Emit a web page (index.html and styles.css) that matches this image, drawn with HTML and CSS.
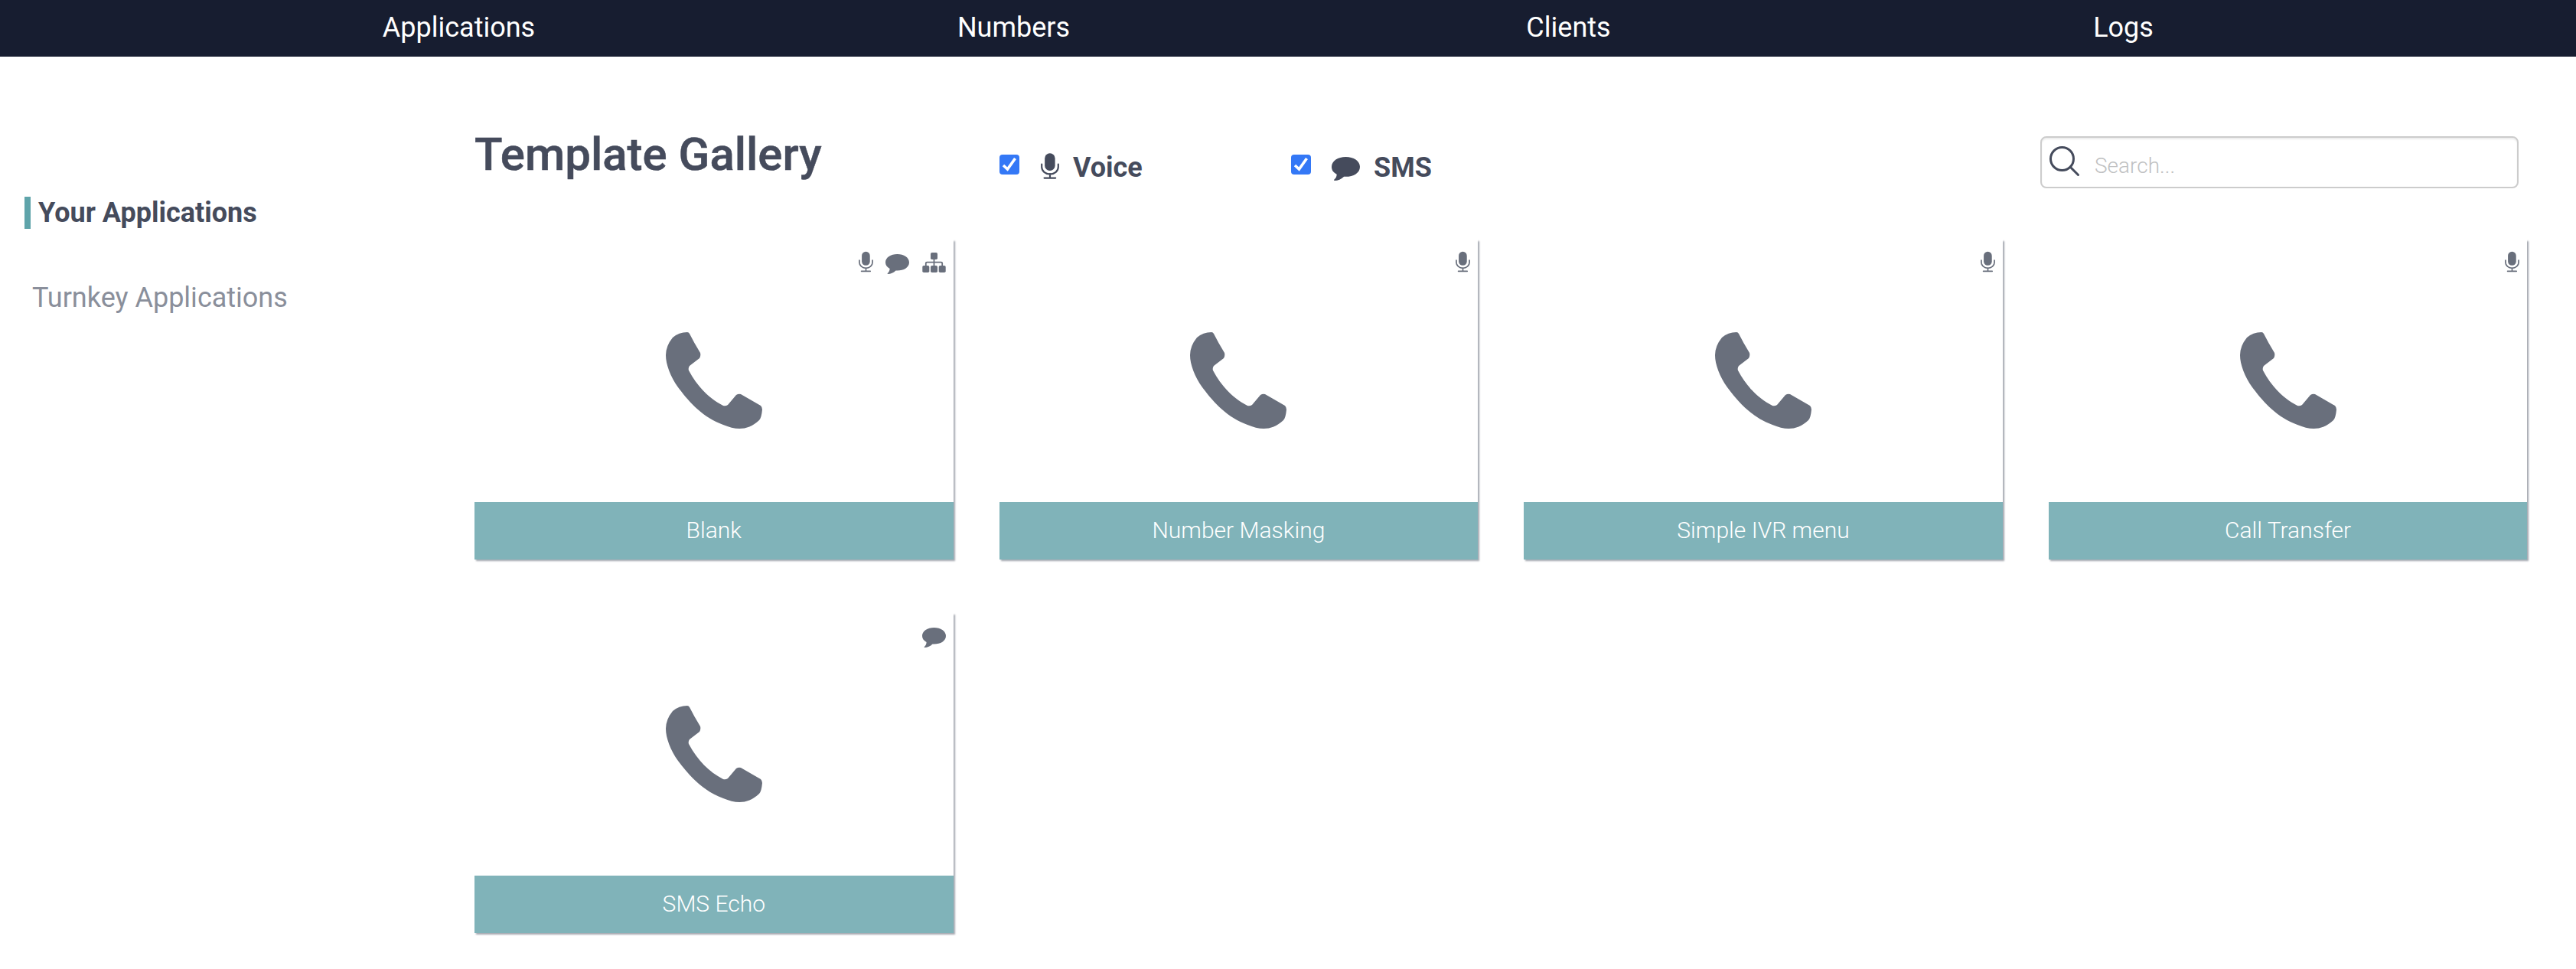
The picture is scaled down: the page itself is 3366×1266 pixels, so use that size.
FILE: index.html
```html
<!DOCTYPE html>
<html lang="en">
<head>
<meta charset="utf-8">
<title>Template Gallery</title>
<link rel="stylesheet" href="styles.css">
</head>
<body>
<svg class="defs" aria-hidden="true">
  <symbol id="phone" viewBox="0 0 126 126">
    <path d="M9 7Q17 0 28 0Q30 0 31 2Q37 14 45 27Q46 31 44 34L31 44Q29 47 30 50C42 72 56 86 75 96Q78 97 81 95L92 82Q95 80 98 81L124 96Q126 98 126 101Q125 112 122 115C107 129 92 128 75 121C48 111 31 92 16 72C6 58 0 42 0 30Q0 18 9 7Z"/>
  </symbol>
  <symbol id="mic" viewBox="0 0 20 28">
    <rect x="4.3" y="0" width="11.2" height="19" rx="5.5"/>
    <path d="M1 12v3a9 7.8 0 0 0 18 0v-3M10 22.5v4M3.8 27h12.2" fill="none" stroke="currentColor" stroke-width="1.8" stroke-linecap="round"/>
  </symbol>
  <symbol id="bubble" viewBox="0 0 31 26">
    <path d="M15.500 0C24 0 31 4.500 31 10.800C31 17.500 24 21.600 15.500 21.600L13.500 21.500C10.500 24.500 7 25.900 3 25.900C2.300 25.500 2.700 25 3.300 24.400C5 22.800 5.400 21.500 5.600 19C2 17 0 14.500 0 10.800C0 4.500 7 0 15.500 0Z"/>
  </symbol>
  <symbol id="tree" viewBox="0 0 31 26">
    <rect x="11" y="0" width="9" height="9" rx="1.800"/>
    <rect x="0.300" y="17" width="9" height="9" rx="1.800"/>
    <rect x="11" y="17" width="9" height="9" rx="1.800"/>
    <rect x="21.700" y="17" width="9" height="9" rx="1.800"/>
    <path d="M15.500 8v10M4.800 18v-4q0-1.300 1.300-1.300h18.800q1.300 0 1.300 1.300v4" fill="none" stroke="currentColor" stroke-width="1.800"/>
  </symbol>
</svg>

<nav class="topbar">
  <a>Applications</a><a>Numbers</a><a>Clients</a><a>Logs</a>
</nav>

<div class="layout">
  <aside class="sidebar">
    <a class="side-link active">Your Applications</a>
    <a class="side-link">Turnkey Applications</a>
  </aside>
  <main class="content">
    <header class="toolbar">
      <h1>Template Gallery</h1>
      <label class="filter voice">
        <svg class="check" viewBox="0 0 26 26"><rect width="26" height="26" rx="4"/><path d="M5 14L10.500 19L20.500 5"/></svg>
        <svg class="filter-mic"><use href="#mic"/></svg>
        <span>Voice</span>
      </label>
      <label class="filter sms">
        <svg class="check" viewBox="0 0 26 26"><rect width="26" height="26" rx="4"/><path d="M5 14L10.500 19L20.500 5"/></svg>
        <svg class="filter-bubble" viewBox="0 0 31 26" preserveAspectRatio="none"><use href="#bubble" width="31" height="26"/></svg>
        <span>SMS</span>
      </label>
      <div class="search">
        <svg class="lens" viewBox="0 0 42 42"><circle cx="17.500" cy="17.500" r="15"/><path d="M28.500 28.500L38.500 38.500"/></svg>
        <span>Search...</span>
      </div>
    </header>
    <section class="cards">
      <article class="card">
        <div class="tags"><svg class="mic"><use href="#mic"/></svg><svg class="bubble"><use href="#bubble"/></svg><svg class="tree"><use href="#tree"/></svg></div>
        <svg class="phone"><use href="#phone"/></svg>
        <footer>Blank</footer>
      </article>
      <article class="card">
        <div class="tags"><svg class="mic"><use href="#mic"/></svg></div>
        <svg class="phone"><use href="#phone"/></svg>
        <footer>Number Masking</footer>
      </article>
      <article class="card">
        <div class="tags"><svg class="mic"><use href="#mic"/></svg></div>
        <svg class="phone"><use href="#phone"/></svg>
        <footer>Simple IVR menu</footer>
      </article>
      <article class="card">
        <div class="tags"><svg class="mic"><use href="#mic"/></svg></div>
        <svg class="phone"><use href="#phone"/></svg>
        <footer>Call Transfer</footer>
      </article>
      <article class="card">
        <div class="tags"><svg class="bubble"><use href="#bubble"/></svg></div>
        <svg class="phone"><use href="#phone"/></svg>
        <footer>SMS Echo</footer>
      </article>
    </section>
  </main>
</div>
</body>
</html>
```
FILE: styles.css
```css
* { box-sizing: border-box; }
body {
  margin: 0;
  height: 1266px;
  overflow: hidden;
  background: #fff;
  color: #454b5c;
  font-family: Roboto, sans-serif;
  font-size: 36px;
}
svg { display: block; fill: currentColor; }
.defs { position: absolute; width: 0; height: 0; }

.topbar {
  display: grid;
  grid-template-columns: repeat(4, 725px);
  height: 74px;
  padding-left: 237px;
  background: #171d30;
  color: #fff;
  line-height: 72px;
  text-align: center;
}

.layout { display: flex; }
.sidebar {
  display: flex;
  flex-direction: column;
  width: 620px;
  padding: 183px 0 0 32px;
  gap: 69px;
}
.side-link {
  height: 42px;
  padding-left: 10px;
  color: #8a8f9b;
  line-height: 42px;
}
.side-link.active {
  border-left: 8px solid #5fa4aa;
  color: #454b5c;
  font-weight: 700;
}

.content { flex: 1; }
.toolbar {
  display: flex;
  align-items: flex-start;
  height: 239px;
}
h1 {
  width: 686px;
  margin: 93px 0 0;
  font-size: 60px;
  font-weight: 500;
  line-height: 70px;
  -webkit-text-stroke: .5px currentColor;
}
.filter {
  display: flex;
  margin-top: 124px;
  font-weight: 700;
  line-height: 42px;
}
.voice { width: 381px; }
.sms { width: 979px; }
.check { width: 26px; height: 26px; margin-top: 4px; fill: #3478f6; }
.check path { fill: none; stroke: #fff; stroke-width: 3.6; }
.filter-mic { width: 24px; height: 34px; margin: 2px 18px 0 28px; }
.filter-bubble { width: 37px; height: 31px; margin: 7px 18px 0 27px; }

.search {
  display: flex;
  width: 625px;
  height: 68px;
  margin-top: 104px;
  border: 2px solid #ccc;
  border-radius: 8px;
  box-shadow: inset 0 2px 2px rgba(0, 0, 0, .075);
  color: #c0c1c2;
  font-size: 28px;
  font-weight: 300;
  line-height: 73px;
}
.lens {
  width: 42px;
  height: 42px;
  margin: 10px 18px 0 9px;
  fill: none;
  stroke: #454b5c;
  stroke-width: 3;
  stroke-linecap: round;
}

.cards {
  display: grid;
  grid-template-columns: repeat(4, 625.6px);
  column-gap: 60px;
  row-gap: 70px;
}
.card {
  display: flex;
  flex-direction: column;
  align-items: center;
  height: 418px;
  box-shadow: 2px 2px 2px #a5a9b1;
  color: #696f7c;
}
.tags {
  display: flex;
  justify-content: flex-end;
  align-self: stretch;
  height: 121px;
  padding: 15px 10px 0 0;
  gap: 16.5px;
}
.mic { width: 19px; height: 28px; }
.bubble { width: 31px; height: 26px; margin-top: 4px; }
.tree { width: 31px; height: 26px; margin-top: 2px; }
.phone { width: 126px; height: 126px; }
.card footer {
  align-self: stretch;
  height: 75px;
  margin-top: auto;
  background: #80b3b9;
  color: #fff;
  font-size: 30px;
  font-weight: 300;
  line-height: 74px;
  text-align: center;
}
```
